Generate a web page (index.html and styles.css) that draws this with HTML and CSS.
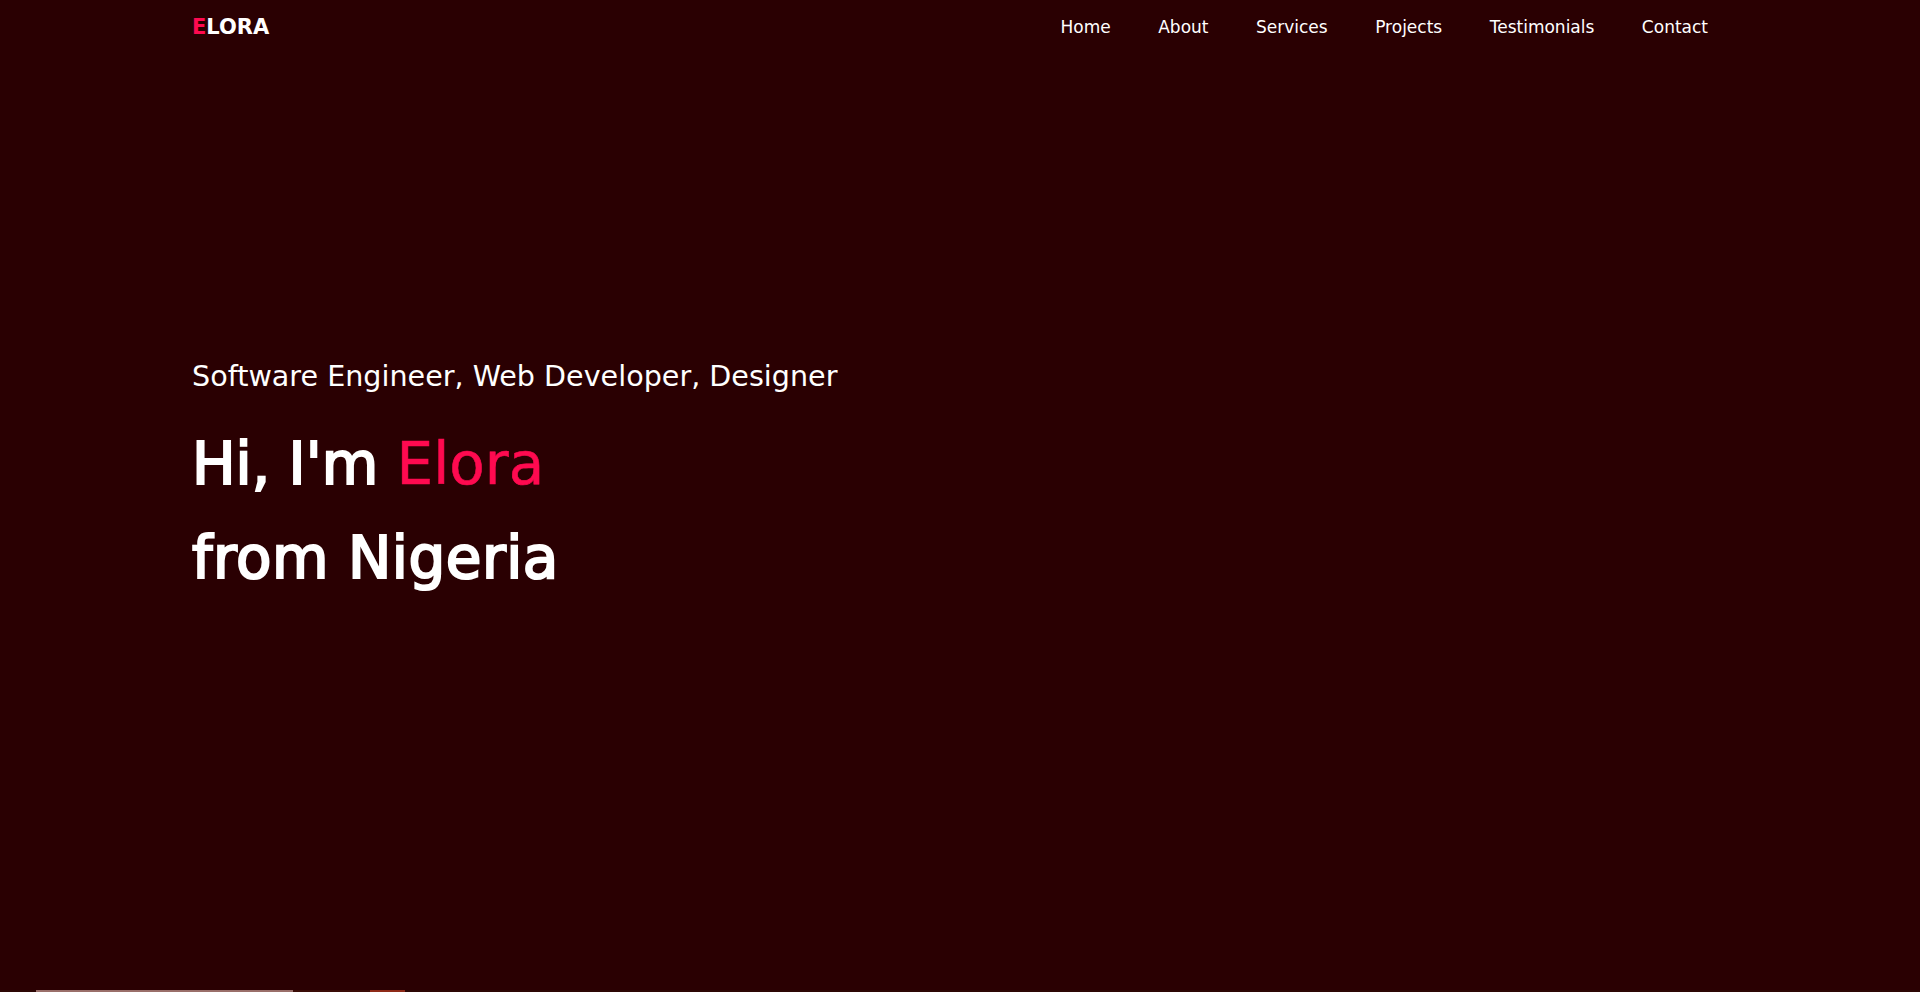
FILE: index.html
```html
<!DOCTYPE html>
<html lang="en">
<head>
<meta charset="UTF-8">
<title>Elora - Portfolio</title>
<link rel="stylesheet" href="styles.css">
</head>
<body>
<div class="page">
  <header class="site-header">
    <div class="container header-inner">
      <a class="logo" href="#"><span class="accent">E</span>LORA</a>
      <nav class="main-nav">
        <a href="#">Home</a>
        <a href="#">About</a>
        <a href="#">Services</a>
        <a href="#">Projects</a>
        <a href="#">Testimonials</a>
        <a href="#">Contact</a>
      </nav>
    </div>
  </header>
  <section class="hero">
    <div class="container hero-inner">
      <p class="hero-sub">Software Engineer, Web Developer, Designer</p>
      <h1 class="hero-title"><span class="bold">Hi, I'm</span> <span class="accent name">Elora</span><br><span class="bold second">from Nigeria</span></h1>
    </div>
  </section>
  <section class="about-peek">
    <div class="peek-frame"></div>
    <div class="peek-gap"></div>
    <div class="peek-red"></div>
  </section>
</div>
</body>
</html>
```

FILE: styles.css
```css
* { box-sizing: border-box; }
html, body {
  margin: 0;
  padding: 0;
  background: #2a0002;
  overflow: hidden;
}
body {
  font-family: "DejaVu Sans", "Liberation Sans", sans-serif;
  color: #ffffff;
}
.page {
  height: 992px;
  overflow: hidden;
  display: flex;
  flex-direction: column;
}
.container {
  width: 1536px;
  margin: 0 auto;
}
.site-header {
  height: 0;
  position: relative;
  z-index: 2;
}
.header-inner {
  display: flex;
  justify-content: space-between;
  align-items: flex-start;
  padding-right: 20px;
}
.logo {
  font-weight: bold;
  font-size: 21px;
  letter-spacing: 0;
  color: #ffffff;
  text-decoration: none;
  padding-top: 14px;
  line-height: 26px;
}
.accent { color: #ff0a50; }
.main-nav {
  display: flex;
  gap: 47.5px;
  padding-top: 16px;
}
.main-nav a {
  color: #ffffff;
  text-decoration: none;
  font-size: 17px;
  line-height: 22px;
}
.hero {
  height: 990px;
  flex: none;
  display: flex;
}
.hero-inner {
  padding-top: 356px;
}
.hero-sub {
  margin: 0;
  font-size: 28.6px;
  line-height: 40px;
}
.hero-title {
  margin: 21px 0 0;
  font-weight: normal;
  font-size: 58px;
  line-height: 94px;
}
.hero-title .bold {
  -webkit-text-stroke: 2.2px #ffffff;
}
.hero-title .second {
  letter-spacing: 0.5px;
}
.hero-title .name {
  -webkit-text-stroke: 0.6px #ff0a50;
}
.about-peek {
  flex: none;
  height: 2px;
  display: flex;
  background: #2d0604;
  padding-left: 36px;
}
.peek-frame {
  width: 257px;
  background: #9a6f6a;
}
.peek-gap {
  width: 77px;
  background: #3a0c06;
}
.peek-red {
  width: 35px;
  background: #8e2a18;
}
```
